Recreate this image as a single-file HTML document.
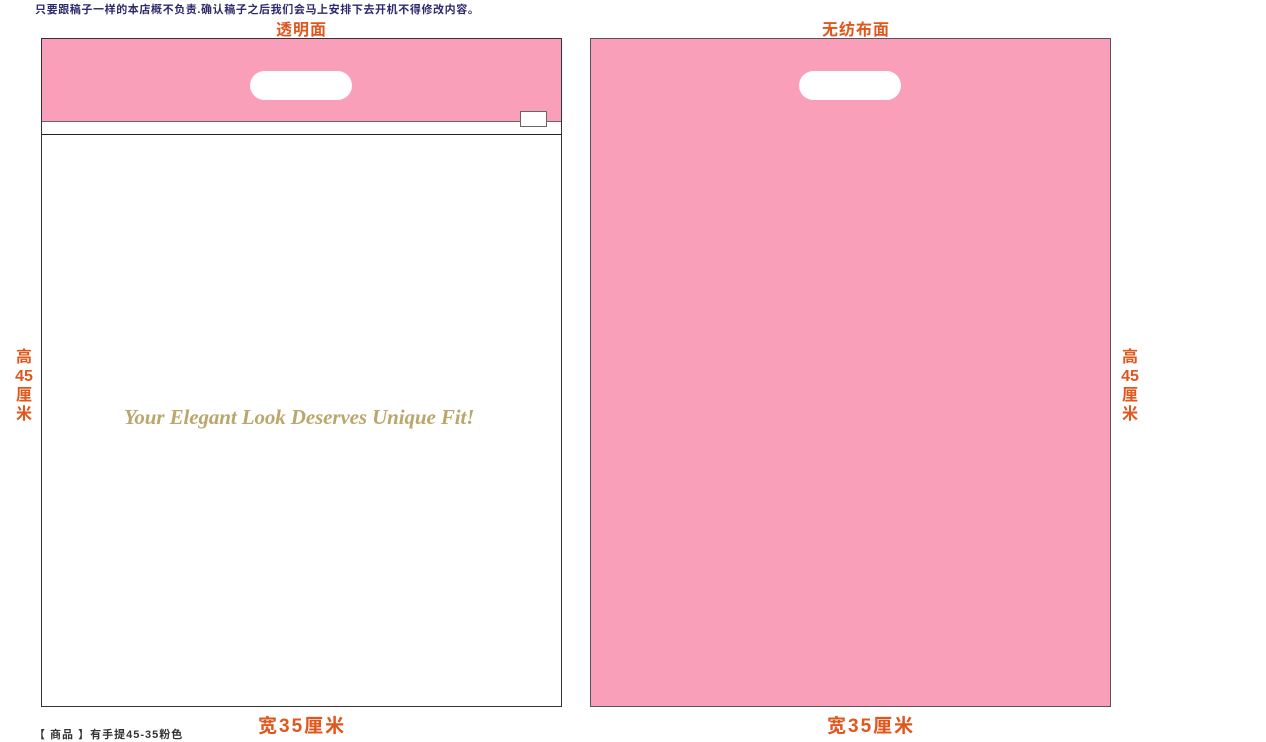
<!DOCTYPE html>
<html><head><meta charset="utf-8"><style>
body{margin:0;width:1266px;height:741px;background:#fff;position:relative;overflow:hidden;font-family:"Liberation Sans","Noto Sans CJK SC",sans-serif}
.a{position:absolute}
.or{color:#e0561c;font-weight:bold}
.v{width:18px;font-size:16px;line-height:19px;text-align:center}
</style></head><body>
<div class="a" style="left:35px;top:1px;font-size:11px;letter-spacing:0.6px;font-weight:bold;color:#2e2a6e;white-space:nowrap">只要跟稿子一样的本店概不负责.确认稿子之后我们会马上安排下去开机不得修改内容。</div>
<div class="a or" style="left:276px;top:16px;font-size:16px;letter-spacing:1px">透明面</div>
<div class="a or" style="left:822px;top:16px;font-size:16px;letter-spacing:1px">无纺布面</div>
<div class="a" style="left:41px;top:38px;width:519px;height:667px;border:1px solid #333;background:#fff"></div>
<div class="a" style="left:42px;top:39px;width:519px;height:82px;background:#f99fb9;border-bottom:1px solid #666"></div>
<div class="a" style="left:42px;top:134px;width:519px;height:1px;background:#222"></div>
<div class="a" style="left:520px;top:111px;width:25px;height:14px;background:#fff;border:1px solid #666"></div>
<div class="a" style="left:250px;top:71px;width:102px;height:29px;border-radius:15px;background:#fff"></div>
<div class="a" style="left:590px;top:38px;width:519px;height:667px;border:1px solid #555;background:#f99fb9"></div>
<div class="a" style="left:799px;top:71px;width:102px;height:29px;border-radius:15px;background:#fff"></div>
<div class="a" style="left:124px;top:405px;font-family:'Liberation Serif',serif;font-style:italic;font-weight:bold;font-size:21px;letter-spacing:-0.1px;color:#bba66c;white-space:nowrap">Your Elegant Look Deserves Unique Fit!</div>
<div class="a or v" style="left:15px;top:348px">高<br>45<br>厘<br>米</div>
<div class="a or v" style="left:1121px;top:348px">高<br>45<br>厘<br>米</div>
<div class="a or" style="left:258px;top:711px;font-size:19px;letter-spacing:2px">宽35厘米</div>
<div class="a or" style="left:827px;top:711px;font-size:19px;letter-spacing:2px">宽35厘米</div>
<div class="a" style="left:34px;top:726px;font-size:11px;letter-spacing:1px;font-weight:bold;color:#333;white-space:nowrap">【 商品 】有手提45-35粉色</div>
</body></html>
